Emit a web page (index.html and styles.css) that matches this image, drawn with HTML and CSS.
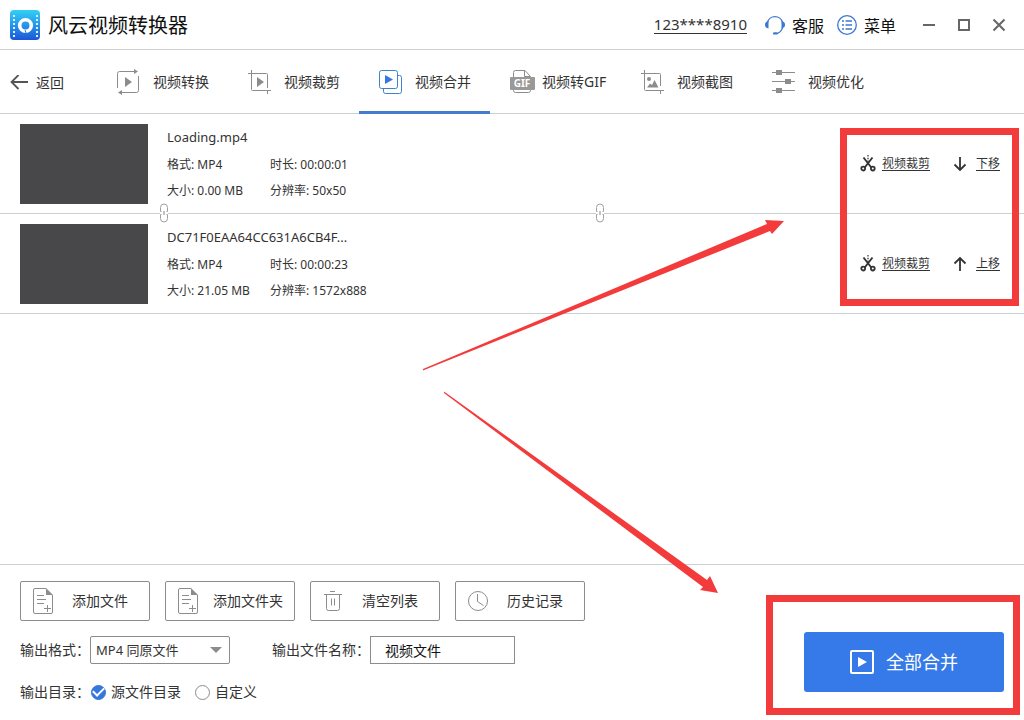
FILE: index.html
```html
<!DOCTYPE html>
<html lang="zh-CN">
<head>
<meta charset="utf-8">
<title>风云视频转换器</title>
<link rel="stylesheet" href="styles.css">
</head>
<body>
<svg class="defs" aria-hidden="true">
  <symbol id="i-scissors" viewBox="0 0 16 18">
    <path d="M3.500 2.500L11.300 12.500M12.500 2.500L4.700 12.500" fill="none" stroke="#333" stroke-width="1.900"/>
    <circle cx="3.200" cy="13.600" r="1.900" fill="none" stroke="#333" stroke-width="1.800"/>
    <circle cx="12.800" cy="13.600" r="1.900" fill="none" stroke="#333" stroke-width="1.800"/>
    <path d="M8 0v7" stroke="#333" stroke-width="1.200" stroke-dasharray="1.400 1.400"/>
  </symbol>
  <symbol id="i-file" viewBox="0 0 20 26">
    <path d="M13 .5H2Q.5.500.5 2V24Q.5 25.500 2 25.500H18Q19.500 25.500 19.500 24V7" fill="none" stroke="#8c8c8c"/>
    <path d="M13 0L20 7H13Z" fill="#8c8c8c"/>
    <path d="M4 7.500h7M4 11.500h9M4 15.500h7M11 20.500h7M14.500 17v7" fill="none" stroke="#8c8c8c"/>
  </symbol>
  <symbol id="i-chain" viewBox="0 0 8 20">
    <path d="M1.500 8.500H.5V4.500a3.500 3.500 0 0 1 7 0V8.500H6.500M1.500 11.500H.5V15.500a3.500 3.500 0 0 0 7 0V11.500H6.500" fill="none" stroke="#a0a0a0"/>
    <path d="M4 8v4" stroke="#888"/>
  </symbol>
</svg>

<header class="titlebar">
  <svg class="logo" viewBox="0 0 30 30" width="30" height="30" aria-hidden="true">
    <defs><linearGradient id="lg" x1="0" y1="0" x2="0" y2="1"><stop offset="0" stop-color="#33d0f5"/><stop offset=".5" stop-color="#2796ea"/><stop offset="1" stop-color="#1d55d6"/></linearGradient></defs>
    <rect width="30" height="30" rx="4" fill="url(#lg)"/>
    <path d="M4 5v22M27 5v22" stroke="#d8f2ff" stroke-width="2" stroke-dasharray="2 2"/>
    <circle cx="15.500" cy="15.500" r="5.800" fill="none" stroke="#fff" stroke-width="3.600"/>
    <path d="M15 20l1 3" stroke="#2a7be2" stroke-width="1"/>
  </svg>
  <h1 class="title">风云视频转换器</h1>
  <nav class="account">
    <a class="user" href="#">123****8910</a>
    <a class="link" href="#">
      <svg viewBox="0 0 20 20" width="20" height="20" aria-hidden="true"><path d="M2.500 7.500a7.700 7.700 0 0 1 15 0M17.500 13q-1.800 4.500-5.500 5.500" fill="none" stroke="#3c78cf" stroke-width="1.300"/><path d="M3.500 6v7.500Q0 13 0 9.800T3.500 6zM16.500 6v7.500Q20 13 20 9.800T16.500 6z" fill="#3c78cf"/><rect x="8" y="17.200" width="4.500" height="2.400" rx="1.200" fill="#3c78cf"/></svg>
      <span>客服</span>
    </a>
    <a class="link" href="#">
      <svg viewBox="0 0 20 20" width="20" height="20" aria-hidden="true"><circle cx="10" cy="10" r="9.300" fill="none" stroke="#3c78cf" stroke-width="1.300"/><path d="M5 6h2M5 10h2M5 14h2M8.500 6h6.500M8.500 10h6.500M8.500 14h6.500" stroke="#3c78cf" stroke-width="1.500"/></svg>
      <span>菜单</span>
    </a>
  </nav>
  <div class="window-buttons">
    <button type="button" aria-label="最小化"><svg viewBox="0 0 14 14" width="14" height="14"><path d="M1 7h12" stroke="#666" stroke-width="2"/></svg></button>
    <button type="button" aria-label="最大化"><svg viewBox="0 0 14 14" width="14" height="14"><rect x="2" y="2" width="10" height="10" fill="none" stroke="#666" stroke-width="2"/></svg></button>
    <button type="button" aria-label="关闭"><svg viewBox="0 0 14 14" width="14" height="14"><path d="M1.500 1.500l11 11M12.500 1.500l-11 11" stroke="#666" stroke-width="2"/></svg></button>
  </div>
</header>

<nav class="toolbar">
  <a class="back" href="#">
    <svg viewBox="0 0 18 16" width="18" height="16" aria-hidden="true"><path d="M8.500 0L1.500 7l7 7M1.500 7H18" fill="none" stroke="#555" stroke-width="1.800"/></svg>
    <span>返回</span>
  </a>
  <a class="tab" href="#">
    <svg viewBox="0 0 24 26" width="24" height="26" aria-hidden="true"><path d="M1.500 19V4.500Q1.500 2.500 3.500 2.500H18M22.500 7V21.500Q22.500 23.500 20.500 23.500H5" fill="none" stroke="#8c8c8c"/><path d="M18 0l4 2.500-4 2.500zM6 21v5l-4-2.500zM9 8l7 5-7 5z" fill="#8c8c8c"/></svg>
    <span>视频转换</span>
  </a>
  <a class="tab" href="#">
    <svg viewBox="0 0 24 26" width="24" height="26" aria-hidden="true"><path d="M4.500 1V20.500Q4.500 21.500 5.500 21.500H24M1 4.500H19.500Q20.500 4.500 20.500 5.500V19M20.500 21v4" fill="none" stroke="#8c8c8c"/><path d="M10 8l7 5-7 5z" fill="#8c8c8c"/></svg>
    <span>视频裁剪</span>
  </a>
  <a class="tab active" href="#" aria-current="page">
    <svg viewBox="0 0 24 26" width="24" height="26" aria-hidden="true"><rect x="1.500" y="1.500" width="18" height="18" rx="2" fill="#fff" stroke="#3c82ce"/><path d="M20 6.500H21.500Q23.500 6.500 23.500 8.500V22.500Q23.500 24.500 21.500 24.500H7.500Q5.500 24.500 5.500 22.500V20" fill="none" stroke="#3c82ce"/><path d="M7 6l8 4.500-8 4.500z" fill="#3577dd"/></svg>
    <span>视频合并</span>
  </a>
  <a class="tab tab-gif" href="#">
    <svg viewBox="0 0 26 26" width="26" height="26" aria-hidden="true"><path d="M4.500 8V3.500Q4.500 1.500 6.500 1.500H16L21.500 7.500V8M15.500 2V7.500H21M4.500 21V21.500Q4.500 23.500 6.500 23.500H19.500Q21.500 23.500 21.500 21.500V21" fill="none" stroke="#8c8c8c"/><rect x="1" y="8" width="25" height="13" rx="1" fill="#999"/><text class="gif" x="13" y="18" text-anchor="middle">GIF</text></svg>
    <span>视频转GIF</span>
  </a>
  <a class="tab" href="#">
    <svg viewBox="0 0 24 26" width="24" height="26" aria-hidden="true"><path d="M4.500 1V20.500Q4.500 21.500 5.500 21.500H24M1 4.500H19.500Q20.500 4.500 20.500 5.500V17M20.500 21v4" fill="none" stroke="#8c8c8c"/><circle cx="9" cy="10" r="2" fill="#8c8c8c"/><path d="M7 18.500l3-4 2 1.500 2.500-5 4 7.500z" fill="#8c8c8c"/></svg>
    <span>视频截图</span>
  </a>
  <a class="tab" href="#">
    <svg viewBox="0 0 24 26" width="24" height="26" aria-hidden="true"><path d="M1 3.500h23M1 12.500h23M1 21.500h23" stroke="#8c8c8c"/><path d="M5 1h6v5H5zM14 10h6v5h-6zM5 19h6v5H5z" fill="#8c8c8c"/></svg>
    <span>视频优化</span>
  </a>
</nav>

<main class="list">
  <article class="item">
    <div class="thumb"></div>
    <div class="info">
      <h2 class="name">Loading.mp4</h2>
      <span>格式: MP4</span><span>时长: 00:00:01</span>
      <span>大小: 0.00 MB</span><span>分辨率: 50x50</span>
    </div>
    <div class="actions">
      <a href="#"><svg width="16" height="18" aria-hidden="true"><use href="#i-scissors"/></svg><span>视频裁剪</span></a>
      <a href="#"><svg viewBox="0 0 14 16" width="14" height="16" aria-hidden="true"><path d="M7 1v13M1.500 8.500L7 14l5.500-5.500" fill="none" stroke="#333" stroke-width="1.800"/></svg><span>下移</span></a>
    </div>
    <svg class="chain chain-start" width="8" height="20" aria-hidden="true"><use href="#i-chain"/></svg>
    <svg class="chain chain-mid" width="8" height="20" aria-hidden="true"><use href="#i-chain"/></svg>
  </article>
  <article class="item">
    <div class="thumb"></div>
    <div class="info">
      <h2 class="name">DC71F0EAA64CC631A6CB4F...</h2>
      <span>格式: MP4</span><span>时长: 00:00:23</span>
      <span>大小: 21.05 MB</span><span>分辨率: 1572x888</span>
    </div>
    <div class="actions">
      <a href="#"><svg width="16" height="18" aria-hidden="true"><use href="#i-scissors"/></svg><span>视频裁剪</span></a>
      <a href="#"><svg viewBox="0 0 14 16" width="14" height="16" aria-hidden="true"><path d="M7 15V2M1.500 7.500L7 2l5.500 5.500" fill="none" stroke="#333" stroke-width="1.800"/></svg><span>上移</span></a>
    </div>
  </article>
  <div class="mark mark-actions"></div>
</main>

<footer class="footer">
  <form class="settings">
    <div class="buttons">
      <button class="tool" type="button"><svg width="20" height="26" aria-hidden="true"><use href="#i-file"/></svg><span>添加文件</span></button>
      <button class="tool tool-long" type="button"><svg width="20" height="26" aria-hidden="true"><use href="#i-file"/></svg><span>添加文件夹</span></button>
      <button class="tool" type="button"><svg viewBox="0 0 20 22" width="20" height="22" aria-hidden="true"><path d="M1 4.500h18M7 1.500h5M3.500 5V18.500Q3.500 20.500 5.500 20.500H14.500Q16.500 20.500 16.500 18.500V5M8.500 8.500v7M11.500 8.500v7" fill="none" stroke="#8c8c8c"/></svg><span>清空列表</span></button>
      <button class="tool" type="button"><svg viewBox="0 0 20 20" width="20" height="20" aria-hidden="true"><circle cx="10" cy="10" r="9.500" fill="none" stroke="#8c8c8c"/><path d="M9.500 3v7.500l6 4" fill="none" stroke="#8c8c8c"/></svg><span>历史记录</span></button>
    </div>
    <div class="row">
      <label for="format">输出格式：</label>
      <div class="select">
        <select id="format"><option>MP4 同原文件</option></select>
        <svg viewBox="0 0 12 6" width="12" height="6" aria-hidden="true"><path d="M0 0h12L6 6z" fill="#8c8c8c"/></svg>
      </div>
      <label class="name-label" for="filename">输出文件名称：</label>
      <input class="text" id="filename" type="text" value="视频文件">
    </div>
    <div class="row row-dir" role="radiogroup" aria-labelledby="dir">
      <span id="dir">输出目录：</span>
      <label class="radio"><input type="radio" name="dir" checked><span>源文件目录</span></label>
      <label class="radio"><input type="radio" name="dir"><span>自定义</span></label>
    </div>
  </form>
  <button class="merge" type="button">
    <svg viewBox="0 0 24 24" width="24" height="24" aria-hidden="true"><rect x="1" y="1" width="22" height="22" rx="1" fill="none" stroke="#fff" stroke-width="2"/><path d="M8 7l9 5-9 5z" fill="#fff"/></svg>
    <span>全部合并</span>
  </button>
  <div class="mark mark-merge"></div>
</footer>

<svg class="pointers" viewBox="0 0 362 374" width="362" height="374" aria-hidden="true">
  <path d="M0 149L344 4 342 0 361 1 349 14 347 11 0 150.500Z" fill="#f43b3b"/>
  <path d="M21 171.500L284 360 287 356 295 373 277 370 280 367 21 173Z" fill="#f43b3b"/>
</svg>
</body>
</html>
```

FILE: styles.css
```css
* { box-sizing: border-box; }

body {
  margin: 0;
  min-height: 100vh;
  display: flex;
  flex-direction: column;
  position: relative;
  background: #fff;
  color: #333;
  font: 14px/20px "Noto Sans", "Noto Sans CJK SC", sans-serif;
}

a { color: inherit; text-decoration: none; }
svg { display: block; flex: none; }
button, input, select { font: inherit; color: inherit; margin: 0; }
button { cursor: pointer; }
h1, h2 { margin: 0; font-weight: 400; }
.defs { position: absolute; width: 0; height: 0; }

.titlebar {
  display: flex;
  align-items: center;
  height: 50px;
  padding: 0 8px 0 10px;
  border-bottom: 1px solid #ccd0d0;
  color: #111;
}
.title { margin-left: 8px; padding-top: 2px; font-size: 20px; line-height: 28px; }
.account { display: flex; align-items: center; gap: 13px; margin-left: auto; font-size: 16px; }
.user { margin-right: 5px; font-size: 15px; color: #333; border-bottom: 1px solid #333; line-height: 18px; }
.link { display: flex; align-items: center; gap: 7px; }
.link span { padding-top: 2px; }
.window-buttons { display: flex; margin-left: 15px; }
.window-buttons button {
  display: grid;
  place-items: center;
  width: 35px;
  height: 48px;
  padding: 0;
  border: 0;
  background: none;
}

.toolbar { display: flex; height: 64px; border-bottom: 1px solid #ccd0d0; }
.back { display: flex; align-items: center; gap: 8px; width: 97px; padding: 2px 0 0 10px; }
.tab {
  display: flex;
  align-items: center;
  gap: 13px;
  width: 131px;
  padding: 2px 0 0 19px;
  border-bottom: 3px solid transparent;
  margin-bottom: -1px;
}
.tab.active { border-bottom-color: #447bcf; }
.tab-gif { gap: 7px; }
.gif { font: 700 10px "Noto Sans", sans-serif; fill: #fff; }

.list { flex: 1; position: relative; }
.item {
  position: relative;
  display: flex;
  height: 100px;
  padding: 10px 24px 9px 20px;
  border-bottom: 1px solid #ccd0d0;
}
.thumb { width: 128px; height: 80px; background: #48484a; }
.info {
  display: grid;
  grid-template-columns: 103px auto;
  grid-template-rows: 26px 30px 22px;
  align-items: center;
  margin-left: 19px;
  font-size: 12px;
  white-space: nowrap;
}
.name { grid-column: 1 / -1; font-size: 13px; }
.actions { display: flex; align-items: center; gap: 23px; margin-left: auto; font-size: 12px; }
.actions a { display: flex; align-items: center; gap: 9px; }
.actions a:first-child { gap: 6px; }
.actions span { text-decoration: underline; text-underline-offset: 2px; }
.chain { position: absolute; bottom: -10px; background: #fff; }
.chain-start { left: 160px; }
.chain-mid { left: 58.2%; }

.footer {
  position: relative;
  display: flex;
  justify-content: space-between;
  align-items: flex-end;
  padding: 16px 20px 18px;
  border-top: 1px solid #ccd0d0;
}
.buttons { display: flex; gap: 15px; }
.tool {
  display: flex;
  align-items: center;
  width: 130px;
  height: 40px;
  padding: 0 6px 0 12px;
  border: 1px solid #8c8c8c;
  border-radius: 2px;
  background: #fff;
}
.tool-long { padding-right: 0; }
.tool span { flex: 1; padding-left: 4px; }
.row { display: flex; align-items: center; margin-top: 15px; }
.row-dir { margin-top: 18px; }
.select { position: relative; width: 140px; }
.select select {
  display: block;
  width: 100%;
  height: 28px;
  padding: 0 24px 0 5px;
  border: 1px solid #8c8c8c;
  border-radius: 2px;
  background: #fff;
  appearance: none;
  font-size: 13px;
}
.select svg { position: absolute; right: 8px; top: 11px; pointer-events: none; }
.name-label { margin-left: 42px; }
.text { width: 145px; height: 28px; padding: 0 14px; border: 1px solid #8c8c8c; border-radius: 0; color: #111; }
.radio { display: flex; align-items: center; gap: 5px; margin: 0 13px 0 1px; }
.radio input {
  display: grid;
  place-items: center;
  width: 15px;
  height: 15px;
  border: 1px solid #8c8c8c;
  border-radius: 50%;
  background: #fff;
  appearance: none;
}
.radio input:checked { border-color: #3577dd; background: #3577dd; }
.radio input:checked::after {
  content: "";
  width: 9px;
  height: 5px;
  border: solid #fff;
  border-width: 0 0 2px 2px;
  transform: rotate(-45deg);
  margin-bottom: 3px;
}
.merge {
  display: flex;
  align-items: center;
  justify-content: center;
  gap: 12px;
  width: 200px;
  height: 60px;
  margin-bottom: 10px;
  border: 0;
  border-radius: 3px;
  background: #357ae8;
  color: #fff;
  font-size: 18px;
}

.mark { position: absolute; border: 7px solid #f43b3b; pointer-events: none; }
.mark-actions { top: 14px; right: 5px; width: 179px; height: 178px; }
.mark-merge { top: 30px; right: 4px; bottom: 5px; width: 254px; }
.pointers { position: absolute; left: 423px; top: 220px; pointer-events: none; }
```
